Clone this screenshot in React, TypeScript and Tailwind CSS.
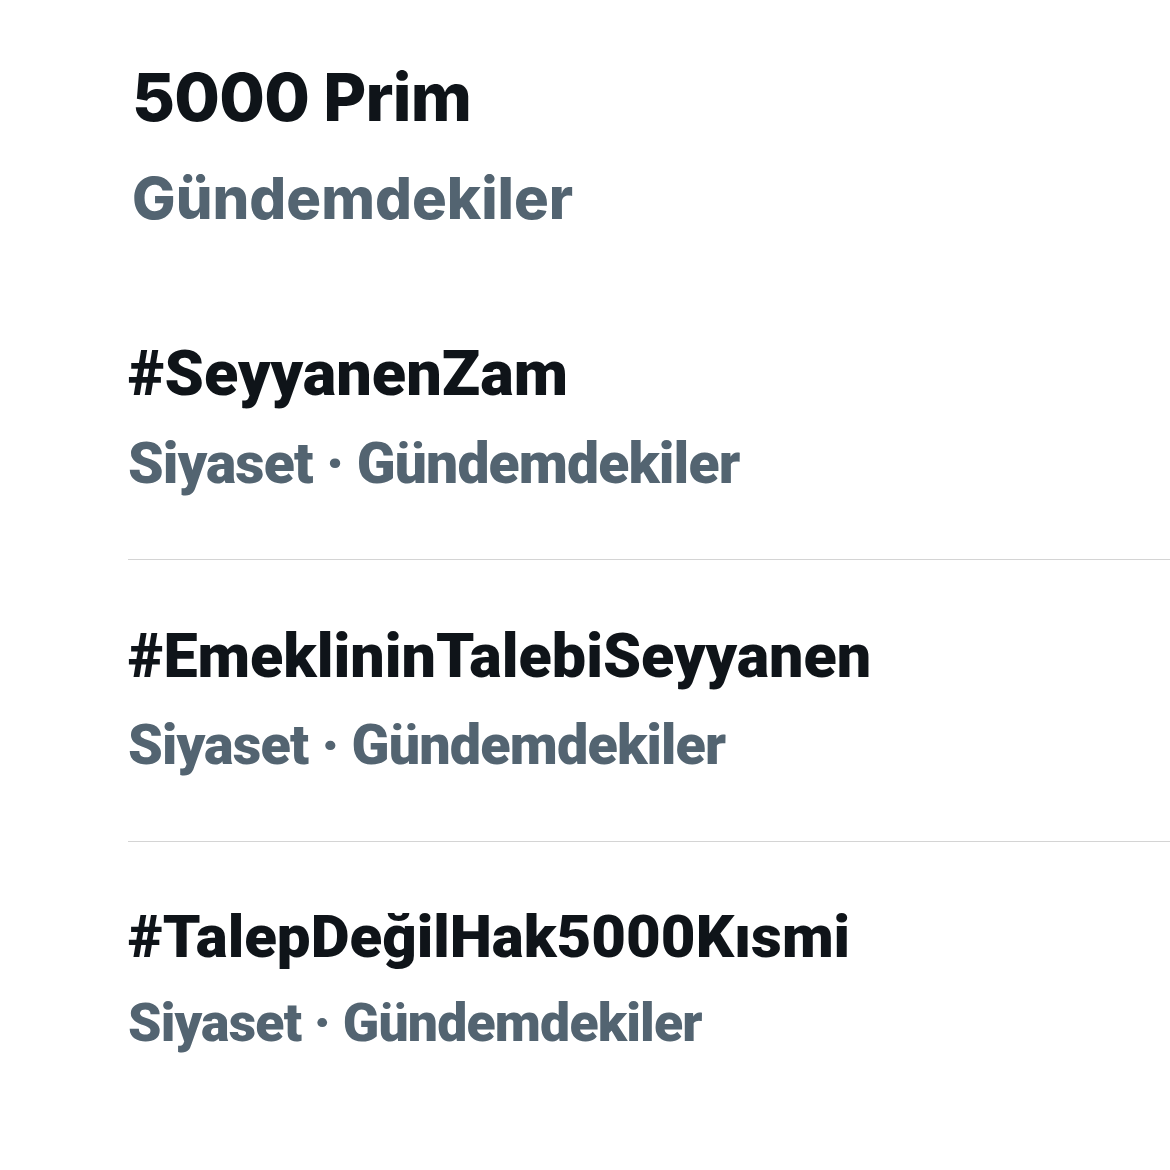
type Trend = {
  tag: string;
  meta: string;
  tagClass: string;
  metaClass: string;
};

// each row is sized a touch differently, as in the captured list
const trends: Trend[] = [
  {
    tag: "#SeyyanenZam",
    meta: "Siyaset · Gündemdekiler",
    tagClass: "text-[63px]",
    metaClass: "mt-[30px] text-[57px]",
  },
  {
    tag: "#EmeklininTalebiSeyyanen",
    meta: "Siyaset · Gündemdekiler",
    tagClass: "text-[61px]",
    metaClass: "mt-[31px] text-[55.7px]",
  },
  {
    tag: "#TalepDeğilHak5000Kısmi",
    meta: "Siyaset · Gündemdekiler",
    tagClass: "text-[60px]",
    metaClass: "mt-[29px] text-[53.5px]",
  },
];

export default function App() {
  return (
    <div className="min-h-[1170px] w-[1170px] bg-white">
      <div className="pl-[132px] pt-[64px] font-['Inter','Noto_Sans',sans-serif]">
        <h1 className="text-[66px] font-extrabold leading-none tracking-[-0.01em] text-[#0f1419]">
          5000 Prim
        </h1>
        <p className="mt-[39px] text-[58px] font-extrabold leading-none text-[#536471]">
          Gündemdekiler
        </p>
      </div>

      <ul className="mt-[115px] flex flex-col pl-[128px] font-['Roboto','Noto_Sans',sans-serif]">
        {trends.map((trend, i) => (
          <li
            key={trend.tag}
            className={
              i < trends.length - 1
                ? "border-b border-[#d4d4d4] pb-[67px] " + (i > 0 ? "pt-[66px]" : "")
                : "pt-[65px]"
            }
          >
            <p className={`${trend.tagClass} font-black leading-none text-[#0f1419]`}>
              {trend.tag}
            </p>
            <p className={`${trend.metaClass} font-black leading-none tracking-[-0.015em] text-[#536471]`}>
              {trend.meta}
            </p>
          </li>
        ))}
      </ul>
    </div>
  );
}
